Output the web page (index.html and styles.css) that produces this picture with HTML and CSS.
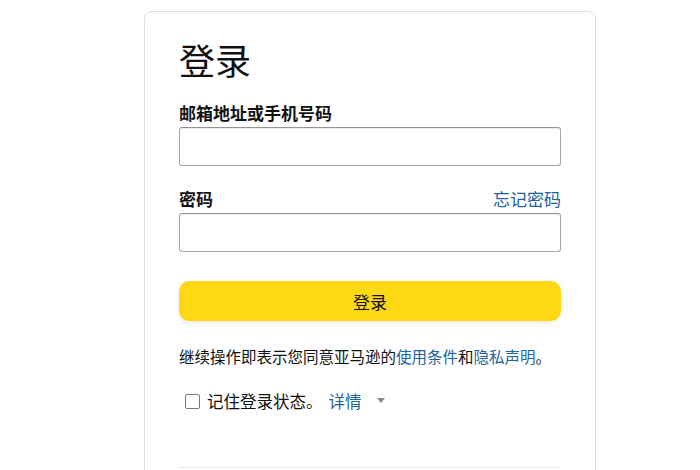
FILE: index.html
```html
<!DOCTYPE html>
<html lang="zh-CN">
<head>
<meta charset="utf-8">
<title>登录</title>
<link rel="stylesheet" href="styles.css">
</head>
<body>
<div class="page">
  <div class="card">
    <h1 class="title">登录</h1>
    <label class="label">邮箱地址或手机号码</label>
    <div class="input"></div>
    <div class="label-row">
      <label class="label">密码</label>
      <a class="link forgot">忘记密码</a>
    </div>
    <div class="input"></div>
    <div class="button">登录</div>
    <p class="terms">继续操作即表示您同意亚马逊的<a class="link">使用条件</a>和<a class="link">隐私声明</a>。</p>
    <div class="remember">
      <span class="checkbox"></span>
      <span class="remember-text">记住登录状态。</span>
      <a class="link details">详情</a>
      <span class="caret"></span>
    </div>
    <div class="divider"></div>
  </div>
</div>
</body>
</html>
```
FILE: styles.css
```css
html, body {
  margin: 0;
  padding: 0;
  background: #fff;
}
body {
  font-family: "Noto Sans CJK SC", "Noto Sans", sans-serif;
  color: #111;
}
.page {
  padding-top: 11px;
  padding-left: 144px;
}
.card {
  box-sizing: border-box;
  width: 452px;
  height: 480px;
  border: 1px solid #ddd;
  border-radius: 8px;
  padding: 26px 34px 0 34px;
}
.title {
  margin: 0;
  font-size: 36px;
  line-height: 43px;
  font-weight: 400;
  color: #111;
}
.label {
  display: block;
  margin-top: 22px;
  font-size: 17px;
  line-height: 20px;
  font-weight: 700;
  color: #111;
}
.label-row {
  display: flex;
  justify-content: space-between;
  align-items: center;
  margin-top: 23px;
}
.label-row .label {
  margin-top: 0;
}
.link {
  color: #2162a1;
  text-decoration: none;
}
.forgot {
  font-size: 17px;
  line-height: 20px;
}
.input {
  box-sizing: border-box;
  margin-top: 4px;
  height: 39px;
  border: 1px solid #a6a6a6;
  border-top-color: #949494;
  border-radius: 3px;
  box-shadow: 0 1px 0 rgba(255,255,255,.5), 0 1px 0 rgba(0,0,0,.07) inset;
}
.button {
  margin-top: 29px;
  height: 40px;
  background: #ffd814;
  border-radius: 10px;
  box-shadow: 0 2px 5px 0 rgba(213,217,217,.5);
  display: flex;
  align-items: center;
  justify-content: center;
  font-size: 17px;
  color: #111;
}
.terms {
  margin: 25px 0 0 0;
  font-size: 15.5px;
  line-height: 20px;
  color: #111;
  white-space: nowrap;
}
.remember {
  margin-top: 24px;
  display: flex;
  align-items: center;
  height: 22px;
  font-size: 16.5px;
}
.checkbox {
  box-sizing: border-box;
  width: 15px;
  height: 15px;
  margin-left: 6px;
  margin-right: 7px;
  border: 1px solid #777;
  border-radius: 2px;
  background: #fff;
}
.remember-text {
  color: #111;
}
.details {
  margin-left: 6px;
}
.caret {
  margin-left: 15px;
  width: 0;
  height: 0;
  border-left: 4px solid transparent;
  border-right: 4px solid transparent;
  border-top: 5px solid #888;
  margin-top: -2px;
}
.divider {
  margin-top: 55px;
  height: 1px;
  background: #e7e7e7;
}
```
